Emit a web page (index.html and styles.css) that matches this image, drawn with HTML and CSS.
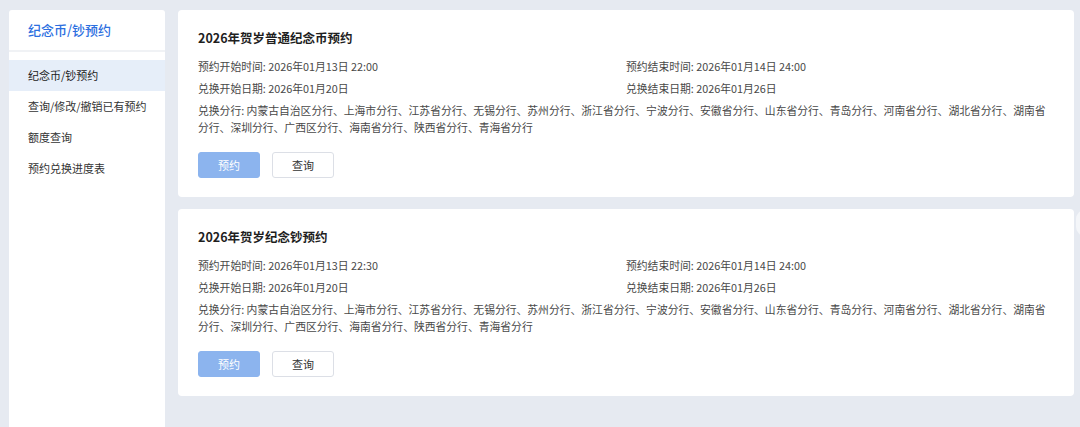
FILE: index.html
```html
<!DOCTYPE html>
<html lang="zh-CN">
<head>
<meta charset="utf-8">
<title>纪念币/钞预约</title>
<link rel="stylesheet" href="styles.css">
</head>
<body>
<div class="page">
  <aside class="sidebar">
    <div class="side-head">纪念币/钞预约</div>
    <nav class="side-nav">
      <div class="nav-item active">纪念币/钞预约</div>
      <div class="nav-item">查询/修改/撤销已有预约</div>
      <div class="nav-item">额度查询</div>
      <div class="nav-item">预约兑换进度表</div>
    </nav>
  </aside>
  <main class="main">
    <section class="card">
      <h2 class="card-title">2026年贺岁普通纪念币预约</h2>
      <div class="info-grid">
        <div class="info">预约开始时间: 2026年01月13日 22:00</div>
        <div class="info">预约结束时间: 2026年01月14日 24:00</div>
        <div class="info">兑换开始日期: 2026年01月20日</div>
        <div class="info">兑换结束日期: 2026年01月26日</div>
        <div class="info wide">兑换分行: 内蒙古自治区分行、上海市分行、江苏省分行、无锡分行、苏州分行、浙江省分行、宁波分行、安徽省分行、山东省分行、青岛分行、河南省分行、湖北省分行、湖南省分行、深圳分行、广西区分行、海南省分行、陕西省分行、青海省分行</div>
      </div>
      <div class="actions">
        <button class="btn btn-primary">预约</button>
        <button class="btn btn-default">查询</button>
      </div>
    </section>
    <section class="card">
      <h2 class="card-title">2026年贺岁纪念钞预约</h2>
      <div class="info-grid">
        <div class="info">预约开始时间: 2026年01月13日 22:30</div>
        <div class="info">预约结束时间: 2026年01月14日 24:00</div>
        <div class="info">兑换开始日期: 2026年01月20日</div>
        <div class="info">兑换结束日期: 2026年01月26日</div>
        <div class="info wide">兑换分行: 内蒙古自治区分行、上海市分行、江苏省分行、无锡分行、苏州分行、浙江省分行、宁波分行、安徽省分行、山东省分行、青岛分行、河南省分行、湖北省分行、湖南省分行、深圳分行、广西区分行、海南省分行、陕西省分行、青海省分行</div>
      </div>
      <div class="actions">
        <button class="btn btn-primary">预约</button>
        <button class="btn btn-default">查询</button>
      </div>
    </section>
  </main>
  <div class="float-dot"></div>
</div>
</body>
</html>
```
FILE: styles.css
```css
* { box-sizing: border-box; }
html, body {
  margin: 0;
  padding: 0;
  height: 100%;
  overflow: hidden;
}
body {
  background: #e6eaf1;
  font-family: "Noto Sans CJK SC", "Noto Sans", sans-serif;
  color: #333;
}
.page {
  position: relative;
  display: flex;
  gap: 13px;
  height: 100vh;
  padding: 10px 6px 0 9px;
  align-items: stretch;
}
.sidebar {
  width: 156px;
  flex: none;
  background: #fff;
  border-radius: 3px 3px 0 0;
}
.side-head {
  height: 42px;
  line-height: 40px;
  padding-left: 19px;
  font-size: 13px;
  font-weight: 500;
  color: #2c6fdf;
  border-bottom: 2px solid #f0f2f5;
}
.side-nav {
  padding-top: 8px;
}
.nav-item {
  height: 31px;
  line-height: 31px;
  padding-left: 19px;
  font-size: 11px;
  color: #333;
  white-space: nowrap;
}
.nav-item.active {
  background: #e6eef9;
  color: #222;
}
.main {
  flex: 1;
  display: flex;
  flex-direction: column;
  gap: 12px;
}
.card {
  background: #fff;
  border-radius: 4px;
  padding: 18px 20px 19px 20px;
}
.card-title {
  margin: 0 0 10px 0;
  font-size: 12.5px;
  line-height: 20px;
  font-weight: 700;
  color: #1f1f1f;
}
.info-grid {
  display: grid;
  grid-template-columns: 1fr 1fr;
  row-gap: 5px;
}
.info {
  font-size: 10.8px;
  line-height: 17px;
  color: #484848;
}
.info.wide {
  grid-column: 1 / -1;
}
.actions {
  display: flex;
  gap: 12px;
  margin-top: 16px;
}
.btn {
  width: 62px;
  height: 26px;
  border-radius: 3px;
  font-family: inherit;
  font-size: 11px;
  padding: 0;
  cursor: pointer;
}
.btn-primary {
  background: #8cb4ee;
  border: 1px solid #8cb4ee;
  color: #fff;
}
.btn-default {
  background: #fff;
  border: 1px solid #dcdfe6;
  color: #333;
}
.float-dot {
  position: absolute;
  right: -14px;
  top: 210px;
  width: 18px;
  height: 26px;
  border-radius: 9px;
  background: #f4f6f9;
}
```
